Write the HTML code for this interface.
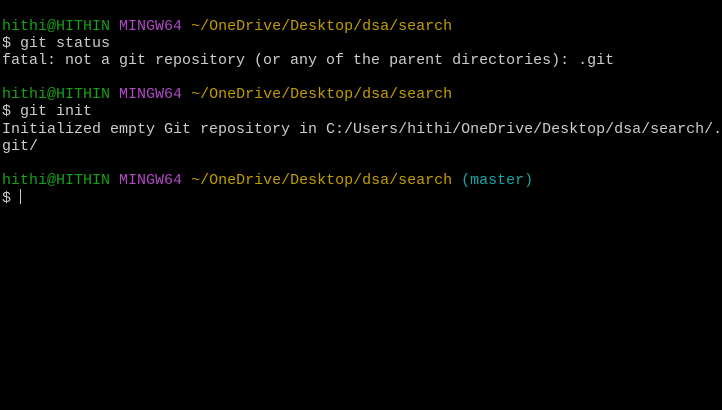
<html><body style="margin:0;background:#000;width:722px;height:410px;overflow:hidden">
<pre style="margin:0;padding:18px 0 0 2px;font:15px/17.1px 'Liberation Mono',monospace;color:#cccccc"><span style="color:#16a016">hithi@HITHIN</span> <span style="color:#b148c6">MINGW64</span> <span style="color:#c19c00">~/OneDrive/Desktop/dsa/search</span>
$ git status
fatal: not a git repository (or any of the parent directories): .git

<span style="color:#16a016">hithi@HITHIN</span> <span style="color:#b148c6">MINGW64</span> <span style="color:#c19c00">~/OneDrive/Desktop/dsa/search</span>
$ git init
Initialized empty Git repository in C:/Users/hithi/OneDrive/Desktop/dsa/search/.
git/

<span style="color:#16a016">hithi@HITHIN</span> <span style="color:#b148c6">MINGW64</span> <span style="color:#c19c00">~/OneDrive/Desktop/dsa/search</span> <span style="color:#14a5a5">(master)</span>
$ <span style="display:inline-block;width:1px;height:15px;background:#ccc;vertical-align:-2px"></span></pre>
</body></html>
